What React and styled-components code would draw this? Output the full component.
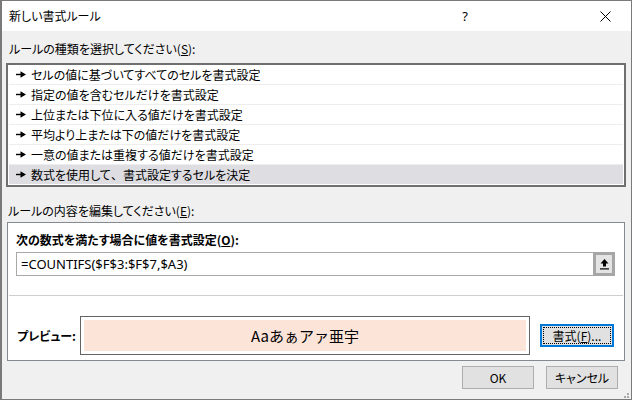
import styled, { createGlobalStyle } from "styled-components";

const GlobalStyle = createGlobalStyle`
  html, body {
    margin: 0;
    padding: 0;
    background: #ffffff;
  }
  body {
    font-family: "Noto Sans CJK JP", "Noto Sans", sans-serif;
    font-size: 12px;
    color: #000;
  }
  * {
    box-sizing: border-box;
  }
`;

const Window = styled.div`
  position: relative;
  width: 632px;
  height: 400px;
  border: 1px solid #7a7a7a;
  border-left-width: 2px;
  background: #f0f0f0;
  display: flex;
  flex-direction: column;
  overflow: hidden;
  font-feature-settings: "palt";
`;

const TitleBar = styled.div`
  height: 30px;
  flex-shrink: 0;
  background: #ffffff;
  display: flex;
  align-items: center;
  padding-left: 7px;
`;

const Title = styled.div`
  flex: 1;
  line-height: 16px;
`;

const Controls = styled.div`
  display: flex;
  align-items: center;
  gap: 94px;
  padding-right: 3px;
`;

const ControlButton = styled.div`
  width: 46px;
  height: 30px;
  display: flex;
  align-items: center;
  justify-content: center;
  font-family: "Noto Sans", sans-serif;
  font-size: 13px;
`;

const Body = styled.div`
  flex: 1;
  display: flex;
  flex-direction: column;
  padding: 10px 5px 0 4px;
`;

const Label = styled.div`
  line-height: 16px;
  margin-top: ${(p) => p.$top || 0}px;
  padding-left: ${(p) => p.$indent || 0}px;
  font-weight: ${(p) => (p.$bold ? 700 : 400)};
`;

const List = styled.div`
  margin-top: 6px;
  height: 124px;
  border: 2px solid #6f6f6f;
  background: #ffffff;
  padding: 0 1px 1px 1px;
  display: flex;
  flex-direction: column;
`;

const Row = styled.div`
  height: 20px;
  display: flex;
  align-items: center;
  gap: 5px;
  padding-left: 7px;
  border-bottom: 1px solid #ededed;
  background: ${(p) => (p.$selected ? "#dddde2" : "#ffffff")};
  line-height: 16px;

  &:last-child {
    height: 19px;
    border-bottom: none;
  }
`;

const Comma = styled.span`
  font-feature-settings: normal;
`;

const Panel = styled.div`
  margin: 3px 1px 0 1px;
  height: 139px;
  border: 1px solid #848a90;
  background: #ffffff;
  display: flex;
  flex-direction: column;
`;

const FormulaSection = styled.div`
  padding: 9px 9px 19px 8px;
  display: flex;
  flex-direction: column;
`;

const FormulaBox = styled.div`
  margin-top: 4px;
  height: 24px;
  border: 1px solid #a9a9a9;
  display: flex;
  align-items: stretch;
`;

const FormulaText = styled.div`
  flex: 1;
  display: flex;
  align-items: center;
  padding-left: 4px;
  font-family: "Noto Sans", "Open Sans", sans-serif;
  font-size: 13px;
  font-feature-settings: normal;
`;

const CollapseButton = styled.div`
  width: 22px;
  margin: -1px -1px -1px 0;
  border: 3px solid #a6a6a6;
  background: #e4e4e4;
  display: flex;
  align-items: center;
  justify-content: center;
`;

const Divider = styled.div`
  height: 1px;
  margin: 0 1px;
  background: #cfcfcf;
`;

const PreviewSection = styled.div`
  flex: 1;
  padding: 20px 10px 5px 9px;
  display: flex;
  align-items: center;
`;

const PreviewLabel = styled.div`
  width: 63px;
  flex-shrink: 0;
  font-weight: 700;
  line-height: 16px;
`;

const PreviewBox = styled.div`
  flex: 1;
  height: 39px;
  border: 1px solid #646464;
  padding: 3px;
  background: #ffffff;
`;

const PreviewFill = styled.div`
  height: 100%;
  background: #fde4d8;
  display: flex;
  align-items: center;
  justify-content: center;
  font-size: 15px;
  font-weight: 400;
  color: #000;
  font-feature-settings: normal;
`;

const Button = styled.div`
  width: ${(p) => p.$width || 72}px;
  height: 23px;
  flex-shrink: 0;
  display: flex;
  align-items: center;
  justify-content: center;
  background: #e1e1e1;
  border: ${(p) => (p.$focused ? "2px solid #0078d7" : "1px solid #adadad")};
  line-height: 16px;
  position: relative;
`;

const FocusRing = styled.div`
  position: absolute;
  inset: 1px;
  border: 1px dotted #000;
`;

const ButtonWrap = styled.div`
  margin-left: 10px;
`;

const Footer = styled.div`
  margin-top: 5px;
  margin-right: 8px;
  display: flex;
  justify-content: flex-end;
  gap: 12px;
`;

const Grip = styled.div`
  position: absolute;
  right: 1px;
  bottom: 1px;
  width: 10px;
  height: 10px;
`;

const RowArrow = () => (
  <svg width="10" height="7" viewBox="0 0 10 7">
    <rect x="0" y="2.8" width="5" height="1.4" fill="#000" />
    <path d="M4.5 0.3 L10 3.5 L4.5 6.7 Z" fill="#000" />
  </svg>
);

const CloseIcon = () => (
  <svg width="11" height="11" viewBox="0 0 11 11">
    <path d="M0.5 0.5 L10.5 10.5 M10.5 0.5 L0.5 10.5" stroke="#000" strokeWidth="1" />
  </svg>
);

const UpIcon = () => (
  <svg width="9" height="11" viewBox="0 0 9 11">
    <path d="M4.5 0 L8.5 4.5 H6 V7.5 H3 V4.5 H0.5 Z" fill="#000" />
    <rect x="0" y="9.3" width="9" height="1.2" fill="#000" />
  </svg>
);

const GripIcon = () => (
  <svg width="10" height="10" viewBox="0 0 10 10">
    {[
      [8, 2],
      [5, 5],
      [8, 5],
      [2, 8],
      [5, 8],
      [8, 8],
    ].map(([x, y]) => (
      <rect key={`${x}-${y}`} x={x - 1} y={y - 1} width="2" height="2" fill="#a8a8a8" />
    ))}
  </svg>
);

const ruleTypes = [
  "セルの値に基づいてすべてのセルを書式設定",
  "指定の値を含むセルだけを書式設定",
  "上位または下位に入る値だけを書式設定",
  "平均より上または下の値だけを書式設定",
  "一意の値または重複する値だけを書式設定",
  "数式を使用して、書式設定するセルを決定",
];

const renderRule = (text) =>
  text.split("、").flatMap((part, i) =>
    i === 0 ? [part] : [<Comma key={i}>、</Comma>, part]
  );

const App = () => {
  const selected = ruleTypes.length - 1;
  return (
    <>
      <GlobalStyle />
      <Window>
        <TitleBar>
          <Title>新しい書式ルール</Title>
          <Controls>
            <ControlButton>?</ControlButton>
            <ControlButton>
              <CloseIcon />
            </ControlButton>
          </Controls>
        </TitleBar>
        <Body>
          <Label $indent={3}>
            ルールの種類を選択してください(<u>S</u>):
          </Label>
          <List>
            {ruleTypes.map((text, i) => (
              <Row key={text} $selected={i === selected}>
                <RowArrow />
                <span>{renderRule(text)}</span>
              </Row>
            ))}
          </List>
          <Label $top={16} $indent={2}>
            ルールの内容を編集してください(<u>E</u>):
          </Label>
          <Panel>
            <FormulaSection>
              <Label $bold>
                次の数式を満たす場合に値を書式設定(<u>O</u>):
              </Label>
              <FormulaBox>
                <FormulaText>=COUNTIFS($F$3:$F$7,$A3)</FormulaText>
                <CollapseButton>
                  <UpIcon />
                </CollapseButton>
              </FormulaBox>
            </FormulaSection>
            <Divider />
            <PreviewSection>
              <PreviewLabel>プレビュー:</PreviewLabel>
              <PreviewBox>
                <PreviewFill>Aaあぁアァ亜宇</PreviewFill>
              </PreviewBox>
              <ButtonWrap>
                <Button $width={74} $focused>
                  <FocusRing />
                  書式(<u>F</u>)...
                </Button>
              </ButtonWrap>
            </PreviewSection>
          </Panel>
          <Footer>
            <Button>OK</Button>
            <Button>キャンセル</Button>
          </Footer>
        </Body>
        <Grip>
          <GripIcon />
        </Grip>
      </Window>
    </>
  );
};

export default App;
